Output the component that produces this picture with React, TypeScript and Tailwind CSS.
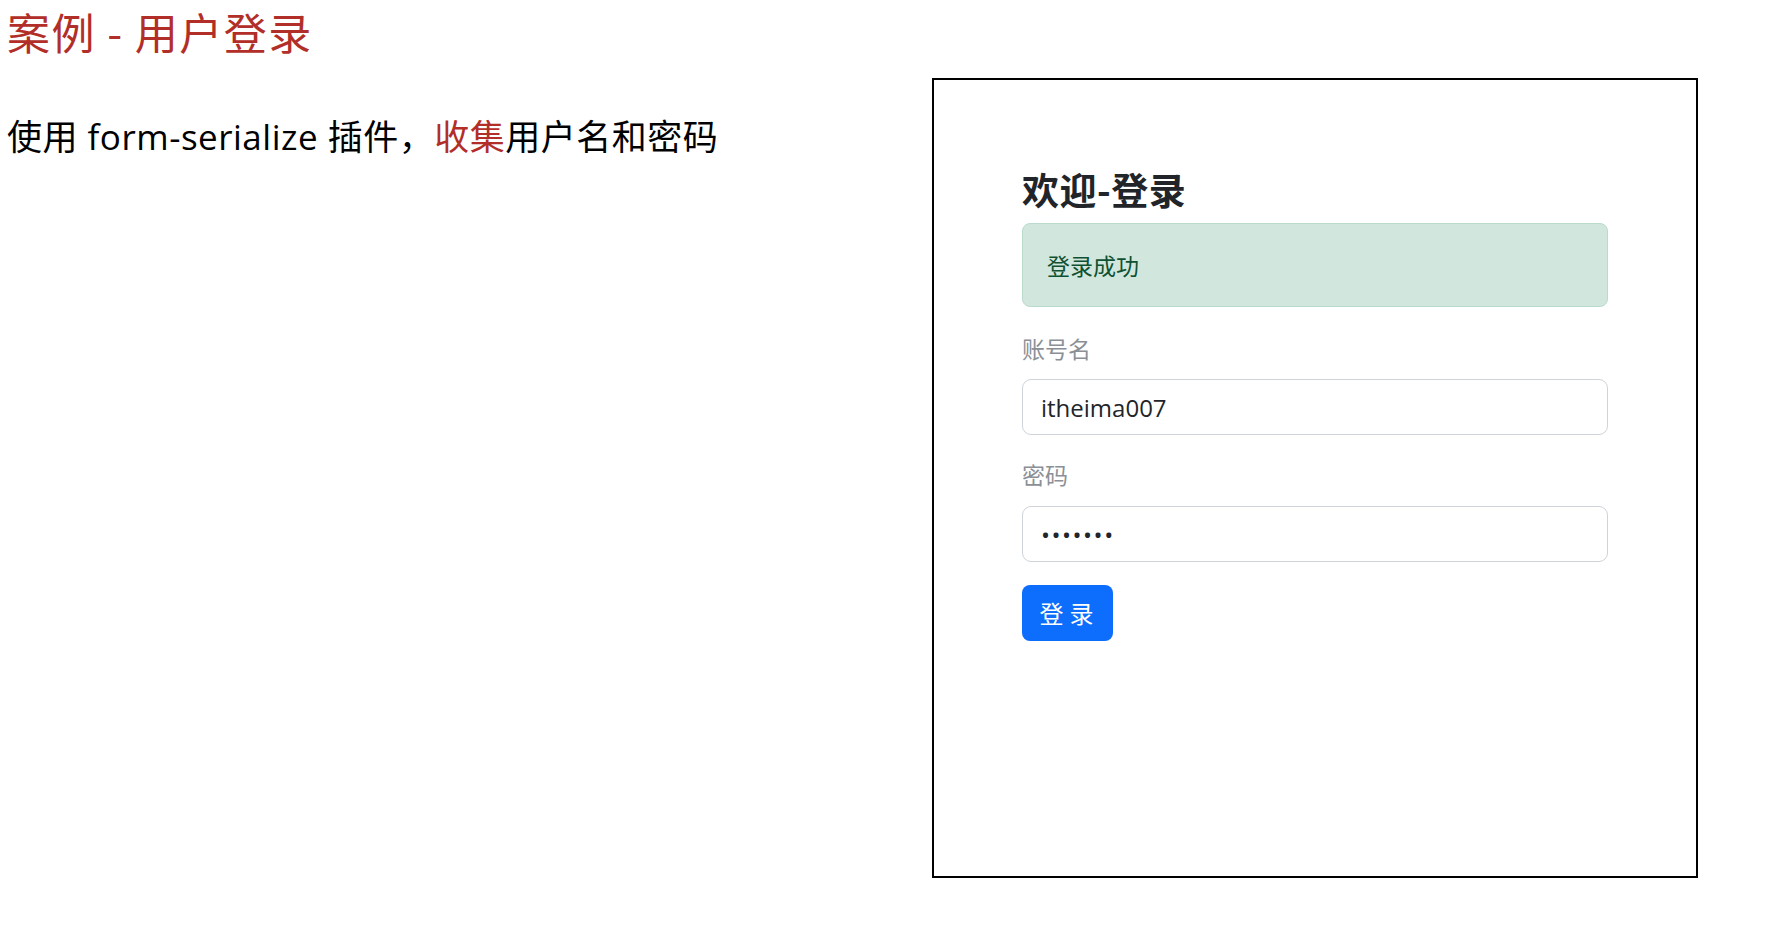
import React from 'react'

const cjk = "font-['Noto_Sans_CJK_SC',sans-serif]"
const latin = "font-['Open_Sans','Noto_Sans_CJK_SC',sans-serif]"

function LoginCard() {
  return (
    <div className="mt-[78px] box-border h-[800px] w-[766px] shrink-0 border-2 border-black bg-white px-[88px] pt-[88px]">
      <h2 className={`${cjk} text-[37px] font-bold leading-[43px] tracking-[0.5px] text-[#212529]`}>欢迎-登录</h2>
      <div
        className={`${cjk} mt-[12px] flex h-[84px] items-center rounded-[8px] border border-[#badbcc] bg-[#d1e7dd] px-[24px] text-[23px] text-[#0f5132]`}
      >
        登录成功
      </div>
      <form className="mt-[26px] flex flex-col" onSubmit={(e) => e.preventDefault()}>
        <label className={`${cjk} text-[23px] leading-[30px] text-[#8b9096]`}>账号名</label>
        <input
          type="text"
          readOnly
          defaultValue="itheima007"
          className={`${latin} mt-[16px] box-border h-[56px] w-full rounded-[9px] border border-[#ced4da] bg-white px-[18px] text-[24px] text-[#212529] outline-none`}
        />
        <label className={`${cjk} mt-[24px] text-[23px] leading-[30px] text-[#8b9096]`}>密码</label>
        <input
          type="password"
          readOnly
          defaultValue="1234567"
          className={`${latin} mt-[17px] box-border h-[56px] w-full rounded-[9px] border border-[#ced4da] bg-white px-[18px] text-[24px] tracking-[1.5px] text-[#212529] outline-none`}
        />
        <div className="mt-[23px]">
          <button
            type="submit"
            className={`${cjk} h-[56px] w-[91px] rounded-[8px] bg-[#0d6efd] pl-[4px] text-[24px] tracking-[6px] text-white`}
          >
            登录
          </button>
        </div>
      </form>
    </div>
  )
}

export default function App() {
  return (
    <div className="flex min-h-[944px] bg-white pl-[7px]">
      <div className="w-[925px] shrink-0">
        <h1 className={`${cjk} mt-[5px] text-[43px] leading-[52px] tracking-[1.5px] text-[#b22e29]`}>
          案例 - 用户登录
        </h1>
        <p className={`${latin} mt-[54px] text-[35px] leading-[51px] tracking-[0.5px] text-black`}>
          使用 form-serialize 插件，<span className="text-[#b22e29]">收集</span>用户名和密码
        </p>
      </div>
      <LoginCard />
    </div>
  )
}
